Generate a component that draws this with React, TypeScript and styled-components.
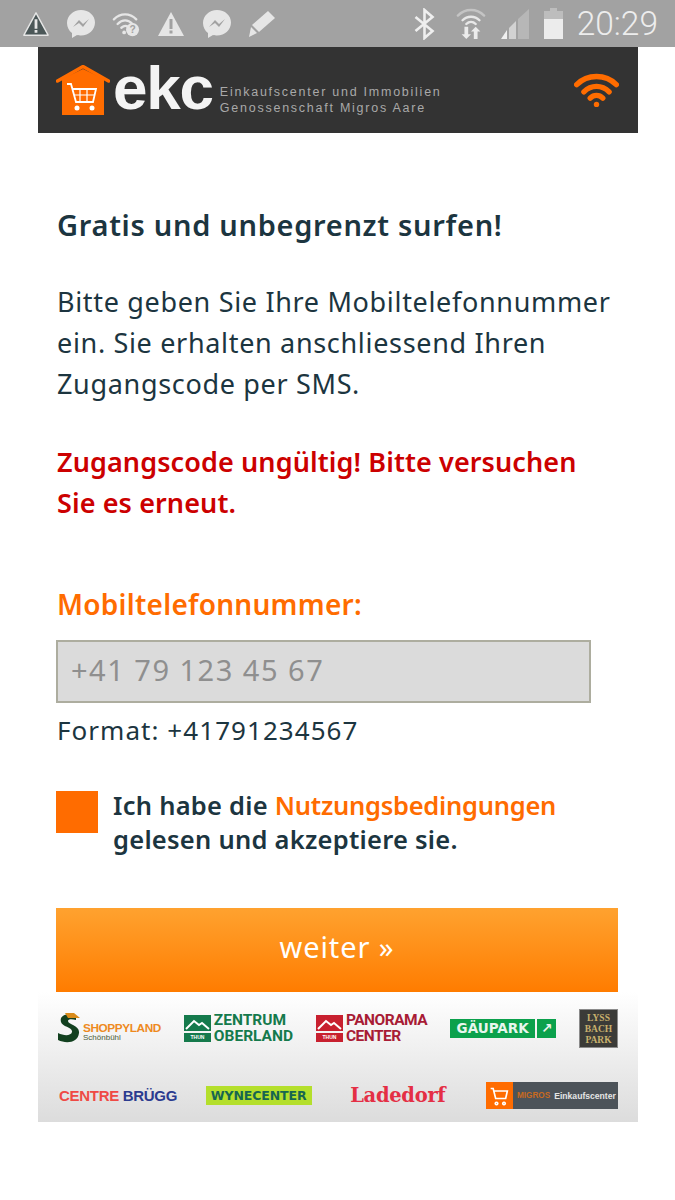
import React from 'react';
import styled, { createGlobalStyle } from 'styled-components';

const Global = createGlobalStyle`
  html, body { margin: 0; padding: 0; background: #fff; }
  * { box-sizing: border-box; }
  body { font-family: "Noto Sans", "Open Sans", sans-serif; }
`;

const orange = '#ff6c00';
const ink = '#1c3540';

const Screen = styled.div`
  width: 675px;
  height: 1200px;
  overflow: hidden;
  background: #fff;
`;

const StatusBar = styled.div`
  height: 47px;
  background: #a2a2a2;
  display: flex;
  align-items: center;
  justify-content: space-between;
  padding: 0 17px 0 22px;
`;

const StatusGroup = styled.div<{ $gap: number }>`
  display: flex;
  align-items: center;
  gap: ${p => p.$gap}px;
`;

const BluetoothIcon = styled.svg`
  margin-right: 7px;
`;

const Clock = styled.span`
  font-family: Roboto, sans-serif;
  font-size: 33.5px;
  font-weight: 300;
  color: #ededed;
`;

const Column = styled.div`
  width: 600px;
  margin-left: 38px;
`;

const Header = styled.header`
  height: 86px;
  background: #333333;
  display: flex;
  align-items: center;
  justify-content: space-between;
  padding: 0 19px 0 18px;
`;

const Brand = styled.div`
  display: flex;
  align-items: center;
`;

const BrandName = styled.span`
  font-family: "Liberation Sans", sans-serif;
  font-size: 62px;
  line-height: 64px;
  font-weight: 700;
  color: #f4f4f4;
  letter-spacing: -1.2px;
  margin: -4px 0 0 3px;
`;

const BrandClaim = styled.div`
  font-family: "Liberation Sans", sans-serif;
  font-size: 12.5px;
  line-height: 16px;
  letter-spacing: 1.75px;
  color: #a9a9a9;
  margin: 20px 0 0 7px;
  white-space: nowrap;
`;

const Main = styled.main`
  padding: 71px 20px 0 18px;
`;

const Title = styled.h1`
  margin: 0 0 0 1px;
  font-size: 29px;
  line-height: 42px;
  font-weight: 600;
  letter-spacing: 0.7px;
  color: ${ink};
`;

const Intro = styled.p`
  margin: 35px 0 0 1px;
  font-size: 27px;
  line-height: 41px;
  letter-spacing: 0.67px;
  color: ${ink};
`;

const ErrorText = styled.p`
  margin: 37px 0 0 1px;
  font-size: 27px;
  line-height: 41px;
  font-weight: 600;
  letter-spacing: 0.1px;
  color: #cc0000;
`;

const FieldLabel = styled.label`
  display: block;
  margin: 60px 0 0 1px;
  font-size: 28px;
  line-height: 42px;
  font-weight: 600;
  letter-spacing: 0.26px;
  color: ${orange};
`;

const PhoneInput = styled.input`
  display: block;
  width: 535px;
  height: 63px;
  margin-top: 15px;
  padding: 0 13px 4px;
  background: #dbdbdb;
  border: 2px solid #adad9f;
  font-family: inherit;
  font-size: 29px;
  letter-spacing: 1.5px;
  outline: none;
  &::placeholder { color: #8f8f8f; opacity: 1; }
`;

const Hint = styled.p`
  margin: 7px 0 0 1px;
  font-size: 26px;
  line-height: 40px;
  letter-spacing: 1.05px;
  color: ${ink};
`;

const TermsRow = styled.div`
  display: flex;
  gap: 15px;
  margin-top: 39px;
`;

const CheckBox = styled.span`
  flex: none;
  width: 42px;
  height: 42px;
  margin-top: 2px;
  background: ${orange};
`;

const TermsText = styled.p`
  margin: -1px 0 0;
  font-size: 25.5px;
  line-height: 34px;
  font-weight: 600;
  letter-spacing: 0.25px;
  color: ${ink};
`;

const TermsLink = styled.span`
  color: ${orange};
  letter-spacing: -0.26px;
`;

const SubmitButton = styled.button`
  display: block;
  width: 100%;
  height: 84px;
  margin-top: 52px;
  padding: 0 0 8px;
  border: 0;
  background: linear-gradient(#ffa22f, #ff7c00);
  color: #fff;
  font-family: inherit;
  font-size: 29px;
  letter-spacing: 0.9px;
`;

const Partners = styled.footer`
  height: 130px;
  background: linear-gradient(#ffffff, #dcdcdc);
  padding: 17px 20px 0 18px;
  display: flex;
  flex-direction: column;
  gap: 35px;
`;

const PartnerRow = styled.div<{ $height: number }>`
  display: flex;
  align-items: center;
  justify-content: space-between;
  height: ${p => p.$height}px;
`;

const LogoPair = styled.div`
  display: flex;
  align-items: center;
  gap: 3px;
`;

const ShoppyText = styled.div`
  font-family: "Liberation Sans", sans-serif;
  font-size: 11.8px;
  line-height: 12px;
  font-weight: 700;
  color: #ee8a1e;
  letter-spacing: -0.4px;
  margin-top: 8px;
  small {
    display: block;
    font-size: 8px;
    line-height: 8px;
    font-weight: 400;
    color: #4d5c3a;
    letter-spacing: 0;
  }
`;

const BlockName = styled.div<{ $color: string; $spacing: number }>`
  font-family: Roboto, sans-serif;
  font-size: 15.5px;
  line-height: 16px;
  font-weight: 700;
  letter-spacing: ${p => p.$spacing}px;
  color: ${p => p.$color};
  white-space: nowrap;
`;

const GauBadge = styled.div`
  display: flex;
  align-items: center;
  gap: 2px;
  height: 19px;
  font-family: "DejaVu Sans", sans-serif;
  font-size: 13.5px;
  font-weight: 700;
  color: #e8f6ee;
`;

const GauName = styled.span`
  background: #0ba14c;
  height: 100%;
  width: 85px;
  display: flex;
  align-items: center;
  justify-content: center;
`;

const GauArrow = styled.span`
  background: #0ba14c;
  height: 100%;
  width: 19px;
  display: flex;
  align-items: center;
  justify-content: center;
`;

const LyssBadge = styled.div`
  width: 39px;
  height: 39px;
  background: #3b3b38;
  border: 1px solid #8b8b8b;
  color: #c7b06d;
  font-family: "Liberation Serif", serif;
  font-size: 9.5px;
  line-height: 11px;
  font-weight: 700;
  text-align: center;
  padding-top: 3px;
`;

const CentreName = styled.div`
  font-family: "Liberation Sans", sans-serif;
  font-size: 15px;
  font-weight: 700;
  letter-spacing: -0.3px;
  padding-left: 3px;
  color: #ef4a45;
  span { color: #2b3b8f; }
`;

const WyneName = styled.div`
  width: 106px;
  height: 19px;
  background: #b4df2c;
  color: #176650;
  font-family: "DejaVu Sans", sans-serif;
  font-size: 12.5px;
  line-height: 19px;
  font-weight: 700;
  text-align: center;
  letter-spacing: -0.1px;
`;

const LadedorfName = styled.div`
  font-family: "DejaVu Serif", serif;
  font-size: 19.5px;
  font-weight: 700;
  letter-spacing: -0.3px;
  color: #e42f45;
  padding: 0 12px 0 10px;
`;

const MigrosBadge = styled.div`
  width: 132px;
  height: 27px;
  background: #4c5359;
  display: flex;
  align-items: center;
  font-family: "Liberation Sans", sans-serif;
  font-size: 8.6px;
  font-weight: 700;
  color: #e5e5e5;
  white-space: nowrap;
  b { color: #c96a20; margin-right: 4px; font-size: 8.2px; }
`;

const MigrosCart = styled.span`
  width: 27px;
  height: 100%;
  margin-right: 4px;
  background: ${orange};
  display: flex;
  align-items: center;
  justify-content: center;
`;

const cartPath = 'M2 3h3l3 12h12l2-9H6M9 19.5a1.5 1.5 0 1 0 .01 0M18 19.5a1.5 1.5 0 1 0 .01 0';

const Wifi = ({ size, color }: { size: number; color: string }) => (
  <svg width={size} height={size * 0.8} viewBox="0 0 50 40" fill="none" stroke={color} strokeWidth="6" strokeLinecap="round">
    <path d="M3 14C15 2 35 2 47 14" />
    <path d="M11 22c8-8 20-8 28 0" />
    <path d="M18 29c4-4 10-4 14 0" />
    <circle cx="25" cy="36" r="3" fill={color} stroke="none" />
  </svg>
);

const Messenger = () => (
  <svg width="30" height="30" viewBox="0 0 30 30">
    <path d="M15 1C7 1 1 7 1 14c0 4 2 8 5 10v5l5-3c1 .3 3 .5 4 .5 8 0 14-6 14-13S23 1 15 1z" fill="#e6e6e6" />
    <path d="M7 18l6-7 4 4 6-5-6 8-4-4z" fill="#a2a2a2" />
  </svg>
);

const Warning = ({ dark }: { dark?: boolean }) => (
  <svg width={dark ? 28 : 30} height="28" viewBox="0 0 30 28">
    <path d="M15 2L28 26H2z" fill={dark ? '#4b5758' : '#e6e6e6'} stroke={dark ? '#e6e6e6' : 'none'} strokeWidth="1.5" strokeLinejoin="round" />
    <path d="M13.5 9h3v10h-3zM13.5 20.5h3v3h-3z" fill={dark ? '#e6e6e6' : '#a2a2a2'} />
  </svg>
);

const StatusIcons = () => (
  <StatusGroup $gap={16}>
    <Warning dark />
    <Messenger />
    <svg width="28" height="28" viewBox="0 0 30 28">
      <g fill="none" stroke="#e6e6e6" strokeWidth="2.5" strokeLinecap="round">
        <path d="M2 9C9 2 19 2 26 9" />
        <path d="M6 14c5-5 11-5 16 0" />
        <path d="M10 18c3-2.500 5-2.500 7-1" />
      </g>
      <circle cx="13" cy="23" r="2" fill="#e6e6e6" />
      <circle cx="22" cy="20" r="7" fill="#e6e6e6" />
      <text x="22" y="24" fontSize="11" fontWeight="700" textAnchor="middle" fill="#a2a2a2" fontFamily="Liberation Sans">?</text>
    </svg>
    <Warning />
    <Messenger />
    <svg width="28" height="28" viewBox="0 0 28 28">
      <path d="M20 1l7 7L11 22 4 15z" fill="#e6e6e6" />
      <path d="M3 17l6 6-8 4z" fill="#e6e6e6" />
    </svg>
  </StatusGroup>
);

const SystemIcons = () => (
  <StatusGroup $gap={14}>
    <BluetoothIcon width="21" height="32" viewBox="0 0 20 32" fill="none" stroke="#efefef" strokeWidth="2.6">
      <path d="M1 9l17 14-8 7V2l8 7L1 23" />
    </BluetoothIcon>
    <svg width="30" height="34" viewBox="0 0 32 34">
      <g fill="none" strokeWidth="2.6" strokeLinecap="round">
        <path d="M2 8C10 0 22 0 30 8" stroke="#c4c4c4" />
        <path d="M7 13c5-5 13-5 18 0" stroke="#e8e8e8" />
        <path d="M11 17c3-3 7-3 10 0" stroke="#e8e8e8" />
      </g>
      <path d="M9 20h4v8h3l-5 5-5-5h3zM19 33h4v-8h3l-5-5-5 5h3z" fill="#ececec" />
    </svg>
    <svg width="30" height="32" viewBox="0 0 30 32">
      <path d="M29 1v30h-11V11z" fill="#b7b7b7" />
      <path d="M16 13v18H9V20z" fill="#d2d2d2" />
      <path d="M7 22v9H1z" fill="#f0f0f0" />
    </svg>
    <svg width="19" height="32" viewBox="0 0 19 32">
      <path d="M6 0h7v3h6v8H0V3h6z" fill="#bdbdbd" />
      <path d="M0 11h19v20H0z" fill="#ececec" />
    </svg>
    <Clock>20:29</Clock>
  </StatusGroup>
);

const HouseLogo = () => (
  <svg width="54" height="50" viewBox="0 0 54 50">
    <path d="M6 14L27 4l21 10v36H6z" fill="#ff6c00" />
    <path d="M1.500 16L27 1.500 52.500 16" fill="none" stroke="#ff6c00" strokeWidth="3.500" strokeLinecap="round" strokeLinejoin="round" />
    <g fill="none" stroke="#fff" strokeWidth="1.8">
      <path d="M11 19h4l5 18h17l3-13H17" />
      <path d="M18 30h20M24 24v13M31 24v13" strokeWidth="1.2" />
    </g>
    <circle cx="21" cy="43" r="2.500" fill="#fff" />
    <circle cx="36" cy="43" r="2.500" fill="#fff" />
  </svg>
);

const Mountain = ({ color }: { color: string }) => (
  <svg width="27" height="27" viewBox="0 0 27 27">
    <path d="M0 0h27v16H0z" fill={color} />
    <path d="M2 14l8-8 5 4 3-2 7 6" fill="none" stroke="#fff" strokeWidth="2" />
    <path d="M0 18h27v9H0z" fill={color} />
    <text x="13.500" y="24" fontSize="5" fontWeight="700" textAnchor="middle" fill="#fff" fontFamily="Liberation Sans">THUN</text>
  </svg>
);

const App: React.FC = () => (
  <Screen>
    <Global />
    <StatusBar>
      <StatusIcons />
      <SystemIcons />
    </StatusBar>
    <Column>
      <Header>
        <Brand>
          <HouseLogo />
          <BrandName>ekc</BrandName>
          <BrandClaim>
            Einkaufscenter und Immobilien
            <br />
            Genossenschaft Migros Aare
          </BrandClaim>
        </Brand>
        <Wifi size={45} color="#ff6c00" />
      </Header>
      <Main>
        <Title>Gratis und unbegrenzt surfen!</Title>
        <Intro>
          Bitte geben Sie Ihre Mobiltelefonnummer
          <br />
          ein. Sie erhalten anschliessend Ihren
          <br />
          Zugangscode per SMS.
        </Intro>
        <ErrorText>
          Zugangscode ungültig! Bitte versuchen
          <br />
          Sie es erneut.
        </ErrorText>
        <FieldLabel htmlFor="phone">Mobiltelefonnummer:</FieldLabel>
        <PhoneInput id="phone" placeholder="+41 79 123 45 67" />
        <Hint>Format: +41791234567</Hint>
        <TermsRow>
          <CheckBox />
          <TermsText>
            Ich habe die <TermsLink>Nutzungsbedingungen</TermsLink>
            <br />
            gelesen und akzeptiere sie.
          </TermsText>
        </TermsRow>
        <SubmitButton>weiter »</SubmitButton>
      </Main>
      <Partners>
        <PartnerRow $height={38}>
          <LogoPair>
            <svg width="24" height="32" viewBox="0 0 24 32">
              <path d="M20 4C12 0 3 3 5 10c1 5 12 5 11 10-1 4-8 4-14 1v7c8 4 20 3 21-7 1-8-11-8-11-12 0-2 4-2 8-1z" fill="#12401f" />
              <path d="M9 1h9l6 5H12z" fill="#d98b1b" />
            </svg>
            <ShoppyText>
              SHOPPYLAND
              <small>Schönbühl</small>
            </ShoppyText>
          </LogoPair>
          <LogoPair>
            <Mountain color="#157a4c" />
            <BlockName $color="#157a4c" $spacing={0}>
              ZENTRUM
              <br />
              OBERLAND
            </BlockName>
          </LogoPair>
          <LogoPair>
            <Mountain color="#c8202f" />
            <BlockName $color="#a81c35" $spacing={-0.5}>
              PANORAMA
              <br />
              CENTER
            </BlockName>
          </LogoPair>
          <GauBadge>
            <GauName>GÄUPARK</GauName>
            <GauArrow>↗</GauArrow>
          </GauBadge>
          <LyssBadge>
            LYSS
            <br />
            BACH
            <br />
            PARK
          </LyssBadge>
        </PartnerRow>
        <PartnerRow $height={27}>
          <CentreName>
            CENTRE <span>BRÜGG</span>
          </CentreName>
          <WyneName>WYNECENTER</WyneName>
          <LadedorfName>Ladedorf</LadedorfName>
          <MigrosBadge>
            <MigrosCart>
              <svg width="20" height="20" viewBox="0 0 24 24" fill="none" stroke="#fff" strokeWidth="2">
                <path d={cartPath} />
              </svg>
            </MigrosCart>
            <b>MIGROS</b>
            Einkaufscenter
          </MigrosBadge>
        </PartnerRow>
      </Partners>
    </Column>
  </Screen>
);

export default App;
